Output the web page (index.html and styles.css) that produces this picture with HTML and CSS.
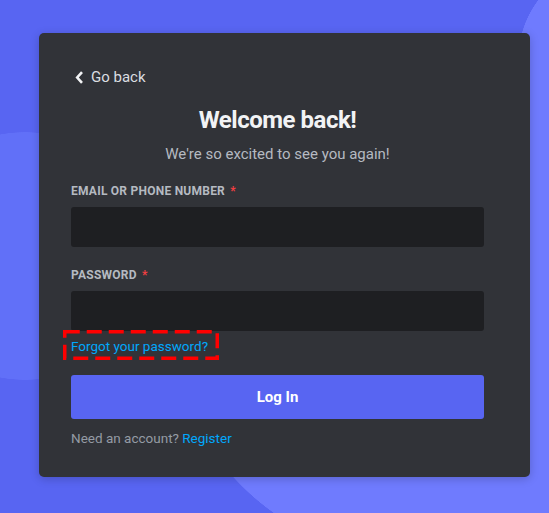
FILE: index.html
```html
<!DOCTYPE html>
<html lang="en">
<head>
  <meta charset="UTF-8">
  <title>Discord - Login</title>
  <link rel="stylesheet" href="styles.css">
</head>
<body>

  <div class="card">
    <a class="back" href="#">
      <svg width="9" height="13" viewBox="0 0 9 13">
        <path d="M7 1.2 L2.2 6.5 L7 11.8" fill="none" stroke="#f2f3f5" stroke-width="2.6"/>
      </svg>
      Go back
    </a>

    <h1>Welcome back!</h1>
    <p class="sub">We're so excited to see you again!</p>

    <label class="field-label">Email or Phone Number <span class="req">*</span></label>
    <input type="text" class="field">

    <label class="field-label second">Password <span class="req">*</span></label>
    <input type="password" class="field">

    <div class="forgot-row">
      <a class="link forgot" href="#">
        Forgot your password?
        <span class="mark">
          <svg width="156" height="30" viewBox="0 0 156 30">
            <rect x="1.75" y="1.75" width="152.5" height="26.5" fill="none" stroke="#ff0000" stroke-width="3.5" stroke-dasharray="15 7"/>
          </svg>
        </span>
      </a>
    </div>

    <button class="login">Log In</button>

    <p class="register">Need an account? <a class="link" href="#">Register</a></p>
  </div>

</body>
</html>
```

FILE: styles.css
```css
html, body {
  margin: 0;
  height: 100%;
  overflow: hidden;
}
body {
  font-family: Roboto, "Noto Sans", Arial, sans-serif;
  padding: 33px 0 0 39px;
  box-sizing: border-box;
  background-color: #5865f2;
  /* soft shapes behind the card */
  background-image:
    radial-gradient(circle 100px at 618px 60px, #6f7bfe 99.5px, transparent 100px),
    linear-gradient(#6f7bfe, #6f7bfe),
    radial-gradient(circle 250px at 418px 309px, #6f7bfe 249.5px, transparent 250px),
    radial-gradient(ellipse 130px 124px at 25px 256px, #6170f8 99.6%, transparent 100%);
  background-repeat: no-repeat;
  background-size: 100% 100%, 100px 460px, 100% 100%, 100% 100%;
  background-position: 0 0, 518px 60px, 0 0, 0 0;
}

.card {
  width: 413px;
  padding: 34px 46px 30px 32px;
  background: #313338;
  border-radius: 5px;
  box-shadow: 0 2px 10px rgba(0,0,0,0.2);
}

.back {
  display: inline-flex;
  align-items: center;
  gap: 7px;
  margin-left: 4px;
  font-size: 15px;
  line-height: 20px;
  color: #dbdee1;
  text-decoration: none;
}

h1 {
  margin: 17px 0 0;
  text-align: center;
  font-size: 24px;
  line-height: 30px;
  font-weight: 700;
  letter-spacing: -0.02em;
  color: #f2f3f5;
}
.sub {
  margin: 9px 0 0;
  text-align: center;
  font-size: 15px;
  line-height: 20px;
  color: #b5bac1;
}

.field-label {
  display: block;
  margin-top: 19px;
  font-size: 12px;
  line-height: 16px;
  font-weight: 700;
  text-transform: uppercase;
  letter-spacing: 0.02em;
  color: #b5bac1;
}
.field-label.second {
  margin-top: 20px;
}
.req {
  color: #f23f42;
  margin-left: 2px;
}
.field {
  display: block;
  width: 100%;
  height: 40px;
  margin-top: 8px;
  box-sizing: border-box;
  border: none;
  border-radius: 3px;
  background: #1e1f22;
  outline: none;
}

.forgot-row {
  margin-top: 6px;
  line-height: 18px;
}
.link {
  color: #00a8fc;
  text-decoration: none;
}
.forgot {
  position: relative;
  font-size: 13.5px;
}
.mark {
  position: absolute;
  left: -8px;
  top: -8px;
  line-height: 0;
}

.login {
  display: block;
  width: 100%;
  height: 44px;
  margin-top: 20px;
  border: none;
  border-radius: 3px;
  background: #5865f2;
  color: #fff;
  font-family: inherit;
  font-size: 15px;
  font-weight: 700;
  cursor: pointer;
}

.register {
  margin: 10px 0 0;
  font-size: 13.5px;
  line-height: 18px;
  color: #949ba4;
}
```
